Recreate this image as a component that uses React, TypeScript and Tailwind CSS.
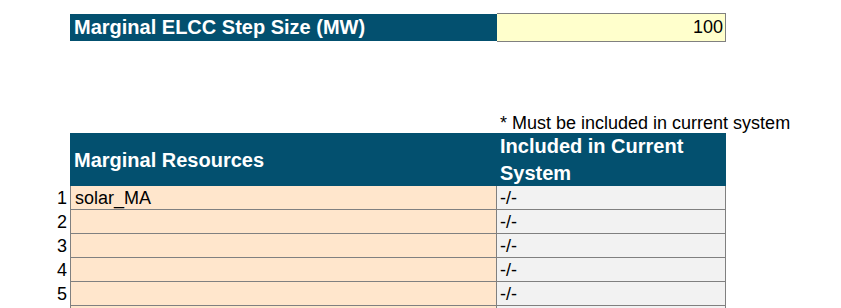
const rows = [
  { n: "1", name: "solar_MA", included: "-/-" },
  { n: "2", name: "", included: "-/-" },
  { n: "3", name: "", included: "-/-" },
  { n: "4", name: "", included: "-/-" },
  { n: "5", name: "", included: "-/-" },
  // row 6 is below the fold, only its cell tops show
  { n: "", name: "", included: "" },
];

export default function App() {
  return (
    <div className="w-[841px] h-[308px] overflow-hidden bg-white pt-[13px] font-['Liberation_Sans',Arial,sans-serif] text-black">
      {/* step size input */}
      <div className="ml-[70px] flex h-[29px]">
        <div className="mt-px h-[27px] w-[427px] bg-[#03506F] pl-[4px] text-[20px] font-bold leading-[27px] text-white">
          Marginal ELCC Step Size (MW)
        </div>
        <div className="h-[29px] w-[229px] border-y border-r border-[#808080] bg-[#FFFFCC] pr-[2px] text-right text-[18px] leading-[27px]">
          100
        </div>
      </div>

      <div className="ml-[500px] mt-[71px] h-[20px] whitespace-nowrap text-[18px] leading-[20px]">
        * Must be included in current system
      </div>

      {/* resources table */}
      <div className="flex flex-col">
        <div className="ml-[70px] flex h-[53px] w-[656px] bg-[#03506F] text-[20px] font-bold text-white">
          <div className="flex w-[427px] items-center pl-[4px]">Marginal Resources</div>
          <div className="w-[229px] pl-[3px] leading-[27px]">
            Included in Current
            <br />
            System
          </div>
        </div>
        {rows.map((r, i) => (
          <div key={i} className="flex h-[24px] text-[18px] leading-[23px]">
            <div className="w-[70px] pr-[3px] pt-px text-right">{r.n}</div>
            <div className="flex w-[656px] border-x border-b border-[#808080]">
              <div className="w-[425px] bg-[#FFE6CC] pl-[4px] pt-px">{r.name}</div>
              <div className="w-[229px] border-l border-[#808080] bg-[#F2F2F2] pl-[3px] pt-px">
                {r.included}
              </div>
            </div>
          </div>
        ))}
      </div>
    </div>
  );
}
